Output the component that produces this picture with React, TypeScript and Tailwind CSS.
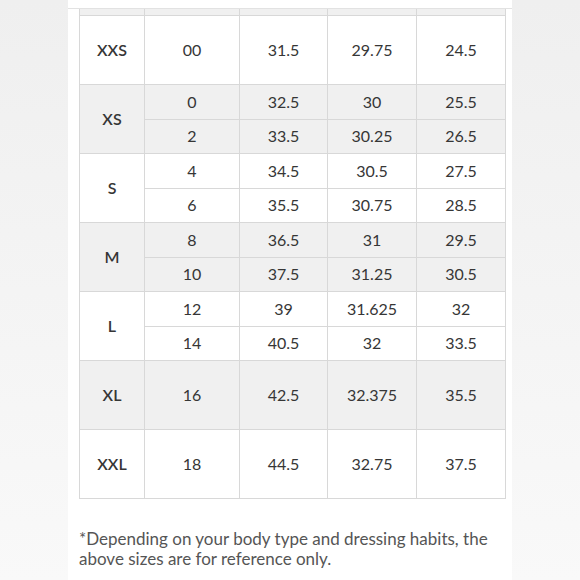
import React from 'react';

type SizeRow = {
  label: string;
  rows: string[][];
  shaded: boolean;
};

const sizes: SizeRow[] = [
  { label: 'XXS', rows: [['00', '31.5', '29.75', '24.5']], shaded: false },
  { label: 'XS', rows: [['0', '32.5', '30', '25.5'], ['2', '33.5', '30.25', '26.5']], shaded: true },
  { label: 'S', rows: [['4', '34.5', '30.5', '27.5'], ['6', '35.5', '30.75', '28.5']], shaded: false },
  { label: 'M', rows: [['8', '36.5', '31', '29.5'], ['10', '37.5', '31.25', '30.5']], shaded: true },
  { label: 'L', rows: [['12', '39', '31.625', '32'], ['14', '40.5', '32', '33.5']], shaded: false },
  { label: 'XL', rows: [['16', '42.5', '32.375', '35.5']], shaded: true },
  { label: 'XXL', rows: [['18', '44.5', '32.75', '37.5']], shaded: false },
];

const cell = 'flex items-center justify-center border-r border-b border-[#d8d8d8]';

export default function App() {
  return (
    <div
      className="w-[580px] h-[580px] overflow-hidden bg-gradient-to-b from-[#efefef] to-[#f9f9f9] flex justify-center"
      style={{ fontFamily: 'Lato, "Noto Sans", sans-serif' }}
    >
      <div className="w-[444px] h-full bg-white">
        <div className="h-[9px] border-b border-[#e2e2e2]" />
        <div className="ml-[11px] w-[427px] border-l border-[#d8d8d8] grid grid-cols-[65px_95px_88px_89px_89px] grid-rows-[7px_repeat(14,34.5px)] text-[16px] text-[#363636]">
          {[0, 1, 2, 3, 4].map(i => (
            <div key={i} className="bg-[#f0f0f0] border-r border-b border-[#d8d8d8]" />
          ))}
          {sizes.map(size => {
            const bg = size.shaded ? 'bg-[#f0f0f0]' : 'bg-white';
            if (size.rows.length === 1) {
              return (
                <React.Fragment key={size.label}>
                  <div className={`${cell} ${bg} row-span-2 font-semibold`}>{size.label}</div>
                  {size.rows[0].map((v, j) => (
                    <div key={j} className={`${cell} ${bg} row-span-2`}>{v}</div>
                  ))}
                </React.Fragment>
              );
            }
            return (
              <React.Fragment key={size.label}>
                <div className={`${cell} ${bg} row-span-2 font-semibold`}>{size.label}</div>
                {size.rows[0].map((v, j) => (
                  <div key={`a${j}`} className={`${cell} ${bg}`}>{v}</div>
                ))}
                {size.rows[1].map((v, j) => (
                  <div key={`b${j}`} className={`${cell} ${bg}`}>{v}</div>
                ))}
              </React.Fragment>
            );
          })}
        </div>
        <p className="mt-[30px] ml-[11px] w-[425px] text-[17px] leading-[20px] text-[#555555]">
          *Depending on your body type and dressing habits, the above sizes are for reference only.
        </p>
      </div>
    </div>
  );
}
